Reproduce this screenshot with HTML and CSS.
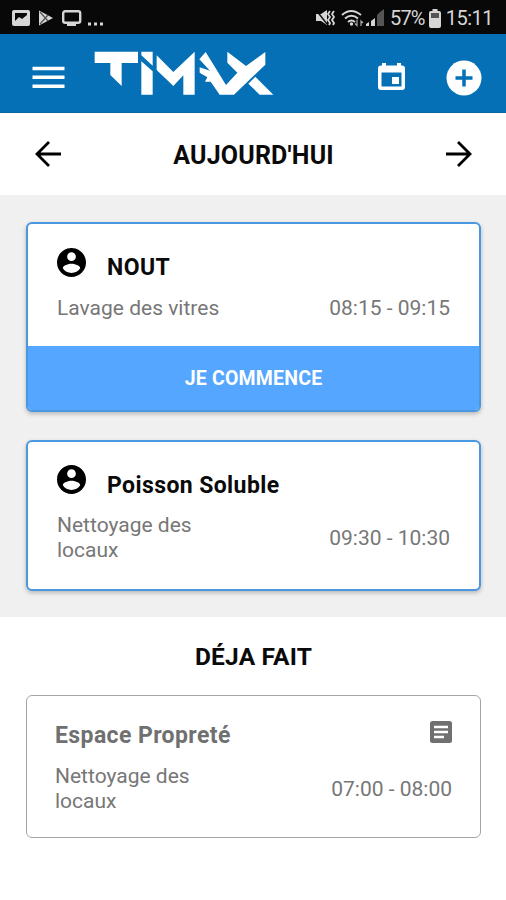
FILE: index.html
```html
<!DOCTYPE html>
<html lang="fr">
<head>
<meta charset="utf-8">
<title>Timax</title>
<link rel="stylesheet" href="styles.css">
</head>
<body>
<div class="status">
  <svg class="status-left" width="92" height="20" viewBox="0 0 92 20" fill="#d6d6d6">
    <path fill-rule="evenodd" d="M2 2h14q2 0 2 2v12q0 2-2 2H2q-2 0-2-2V4q0-2 2-2zM3 5v8l4-4 3 2 5-4V5z"/>
    <path d="M27 2.500l14 7.500-14 7.500z"/><path d="M28 4l8 9M28 16l8-9" stroke="#555" stroke-width="1.300"/>
    <rect x="51.200" y="3.200" width="17" height="11.600" rx="2" fill="none" stroke="#d6d6d6" stroke-width="2.400"/><path d="M55 15h9v3h-9z"/>
    <path d="M76 14.500h3v3h-3zM82 14.500h3v3h-3zM88 14.500h3v3h-3z"/>
  </svg>
  <div class="status-right">
    <svg class="signals" width="70" height="20" viewBox="0 0 70 20" fill="#d6d6d6">
      <path d="M1 6h5l6-4v15l-6-4H1z"/><path d="M1 2l11 14" stroke="#080808" stroke-width="1.300"/>
      <path d="M15 3l-2 3 2 3-2 3 2 3-1 2M19 3l-2 3 2 3-2 3 2 3-1 2" fill="none" stroke="#d6d6d6" stroke-width="1.800"/>
      <path d="M27 7q9-8 19 0M30 10.500q6.500-5.500 13 0M33 14q3.500-3 7 0" fill="none" stroke="#d6d6d6" stroke-width="2"/><circle cx="36.500" cy="16" r="1.700"/><path d="M42 11.500v6l-2-2M46 18v-5l2 2" fill="none" stroke="#aaa" stroke-width="1.200"/>
      <path d="M51 18v-2l3-2v4zM56 18v-5l4-3v8z"/><path d="M62 18V7l3-3v14zM65 4l4-3v17h-4z" fill="#555"/>
    </svg>
    <span class="battery-level">57%</span>
    <svg class="battery" width="12" height="19" viewBox="0 0 12 19"><path d="M3.500 0h5v2H10q2 0 2 2v13q0 2-2 2H2q-2 0-2-2V4q0-2 2-2h1.500z" fill="#d6d6d6"/><path d="M2 4h8v5H2z" fill="#555"/></svg>
    <span class="clock">15:11</span>
  </div>
</div>

<header class="topbar">
  <svg class="menu" width="34" height="23" viewBox="0 0 34 23"><path d="M.5 2.500h32M.5 11.300h32M.5 20.200h32" stroke="#fff" stroke-width="3.600"/></svg>
  <svg class="logo" width="180" height="45" viewBox="220 35 540 135" fill="#fff" role="img" aria-label="Timax">
    <path d="M222 37H352V71H303V140L269 107V71H222z"/>
    <path d="M362 37H396V79L362 48zM362 66L396 96V166H362z"/>
    <path d="M408 48L458 98L522 37V166H488V108L458 140L408 92z"/>
    <path d="M555 38L616 137L650 100L620 70V37L676 80L734 38V76L640 166H597L570 127H553L560 114L537 100V84L568 94L536 60z"/>
    <path d="M683 133L704 112L758 166H717z"/>
  </svg>
  <svg class="calendar" width="27" height="28" viewBox="0 0 27 28"><path fill="#fff" fill-rule="evenodd" d="M4 0h4v2.500h11V0h4v2.500h1q3 0 3 3V24q0 3-3 3H3q-3 0-3-3V5.500q0-3 3-3h1zM3.500 9.500v14h20v-14z"/><path fill="#fff" d="M14 14h7v7h-7z"/></svg>
  <svg class="add" width="36" height="36" viewBox="0 0 36 36"><circle cx="18" cy="18" r="17.500" fill="#fff"/><path d="M18 9.500v17M9.500 18h17" stroke="#0570b5" stroke-width="3.500"/></svg>
</header>

<nav class="daybar">
  <svg width="26" height="26" viewBox="0 0 26 26"><path d="M26 13H2M14 1L2 13l12 12" fill="none" stroke="#000" stroke-width="2.800"/></svg>
  <h1 class="heading">AUJOURD'HUI</h1>
  <svg width="26" height="26" viewBox="0 0 26 26"><path d="M0 13h24M12 1l12 12-12 12" fill="none" stroke="#000" stroke-width="2.800"/></svg>
</nav>

<main class="todo">
  <article class="card card-first">
    <div class="card-head">
      <svg class="avatar" width="29" height="29" viewBox="2 2 20 20"><path d="M12 2C6.480 2 2 6.480 2 12s4.480 10 10 10 10-4.480 10-10S17.520 2 12 2zm0 3c1.660 0 3 1.340 3 3s-1.340 3-3 3-3-1.340-3-3 1.340-3 3-3zm0 14.200c-2.500 0-4.710-1.280-6-3.220.03-1.990 4-3.080 6-3.080 1.990 0 5.970 1.090 6 3.080-1.290 1.940-3.500 3.220-6 3.220z"/></svg>
      <h2 class="client">NOUT</h2>
    </div>
    <div class="details"><p class="task">Lavage des vitres</p><span class="time">08:15 - 09:15</span></div>
    <button class="start">JE COMMENCE</button>
  </article>
  <article class="card card-second">
    <div class="card-head">
      <svg class="avatar" width="29" height="29" viewBox="2 2 20 20"><path d="M12 2C6.480 2 2 6.480 2 12s4.480 10 10 10 10-4.480 10-10S17.520 2 12 2zm0 3c1.660 0 3 1.340 3 3s-1.340 3-3 3-3-1.340-3-3 1.340-3 3-3zm0 14.200c-2.500 0-4.710-1.280-6-3.220.03-1.990 4-3.080 6-3.080 1.990 0 5.970 1.090 6 3.080-1.290 1.940-3.500 3.220-6 3.220z"/></svg>
      <h2 class="client client-long">Poisson Soluble</h2>
    </div>
    <div class="details"><p class="task">Nettoyage des<br>locaux</p><span class="time">09:30 - 10:30</span></div>
  </article>
</main>

<section class="done">
  <h2 class="heading heading-done">DÉJA FAIT</h2>
  <article class="card card-done">
    <div class="card-head">
      <h3 class="client client-done">Espace Propreté</h3>
      <svg class="note" width="22" height="22" viewBox="0 0 22 22"><rect width="22" height="22" rx="2.500" fill="#707070"/><path d="M4 6h14M4 11h14M4 16h10" stroke="#fff" stroke-width="2.400"/></svg>
    </div>
    <div class="details"><p class="task">Nettoyage des<br>locaux</p><span class="time">07:00 - 08:00</span></div>
  </article>
</section>
</body>
</html>
```

FILE: styles.css
```css
* { box-sizing: border-box; }
body { margin: 0; width: 506px; min-height: 900px; background: #fff; font-family: Roboto, "Liberation Sans", sans-serif; color: #0a0a0a; }
h1, h2, h3, p { margin: 0; }
svg { display: block; flex: none; overflow: visible; }

.status { height: 34px; padding: 0 13px 0 12px; background: #080808; display: flex; align-items: center; justify-content: space-between; color: #d6d6d6; font-size: 20px; line-height: 24px; }
.status-left { margin-top: 1px; }
.status-right { display: flex; align-items: center; padding-top: 2px; }
.battery-level { margin-left: 5px; letter-spacing: -0.8px; }
.battery { margin: 0 5px 0 4px; }
.clock { letter-spacing: -0.5px; }

.topbar { height: 79px; padding: 17px 24px 0 32px; background: #0570b5; border-bottom: 1px solid #0865a2; display: flex; align-items: flex-start; }
.menu { margin-top: 15px; }
.logo { margin-left: 28px; }
.calendar { margin: 12px 41px 0 auto; }
.add { margin-top: 9px; }

.daybar { height: 82px; padding: 0 34px 0 35px; display: flex; align-items: center; justify-content: space-between; }
.heading { font-size: 25px; font-weight: 700; line-height: 28px; letter-spacing: 0.2px; text-align: center; }
.daybar .heading { padding-top: 3px; }
.heading-done { font-size: 24.500px; }

.todo { height: 422px; padding: 27px 25px 0 26px; background: #f0f0f0; display: flex; flex-direction: column; gap: 28px; }
.card { border: 2px solid #4a98df; border-radius: 6px; background: #fff; box-shadow: 0 2px 4px rgba(0, 0, 0, .24); display: flex; flex-direction: column; overflow: hidden; }
.card-first { height: 190px; }
.card-second { height: 151px; }
.card-second .avatar { margin-top: -1px; }
.card-head { height: 69px; padding: 24px 29px 0; display: flex; }
.client { margin: 6px 0 0 21px; font-size: 23px; font-weight: 700; line-height: 28px; letter-spacing: 0.4px; white-space: nowrap; }
.details { padding: 2px 29px 0; display: flex; align-items: center; justify-content: space-between; color: #777; font-size: 21px; line-height: 24.500px; }
.card-first .details { padding-top: 3px; }
.card-second .time { padding-top: 1px; }
.start { height: 64px; margin-top: auto; padding: 0; border: 0; background: #55a6fe; color: #fff; font-family: inherit; font-size: 19.500px; font-weight: 700; letter-spacing: 0.2px; }

.done { padding: 26px 25px 0 26px; }
.card-done { height: 143px; margin-top: 24px; border: 1.500px solid #a5a5a5; box-shadow: none; }
.card-done .card-head { height: 68px; justify-content: space-between; }
.client-done { margin: 2px 0 0; color: #707070; }
.note { margin: 1px 0 0; }
.card-done .card-head { padding: 24px 28px 0; }
.card-done .details { padding: 0 28px; }
.card-done .time { padding-top: 2px; }
```
